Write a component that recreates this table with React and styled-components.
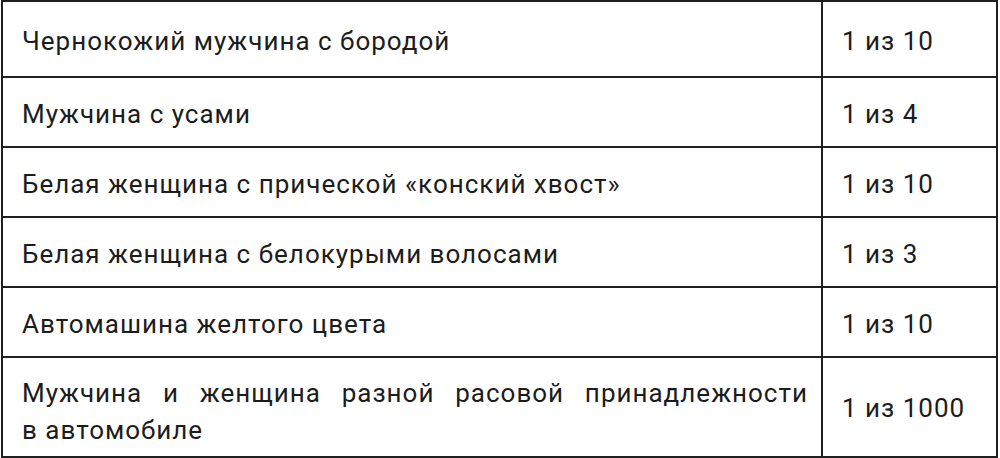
import React from 'react'
import styled, { createGlobalStyle } from 'styled-components'

const Global = createGlobalStyle`
  body {
    margin: 0;
    background: #ffffff;
    font-family: Roboto, "Liberation Sans", sans-serif;
  }
`

const Page = styled.div`
  width: 1000px;
  height: 458px;
  padding: 0 0 0 1px;
  box-sizing: border-box;
`

const Table = styled.table`
  width: 997px;
  border-collapse: collapse;
  color: #1c1c1c;
  font-size: 26px;
  letter-spacing: 1px;
`

const Cell = styled.td`
  border: 2px solid #1f1f1f;
  height: ${p => p.$h}px;
  padding: ${p => p.$top}px 13px 0 19px;
  box-sizing: border-box;
  line-height: 37px;
  vertical-align: middle;
  text-align: ${p => (p.$justify ? 'justify' : 'left')};
  width: ${p => (p.$narrow ? '175px' : 'auto')};
`

const Keep = styled.span`
  white-space: nowrap;
`

const rows = [
  ['Чернокожий мужчина с бородой', '1 из 10'],
  ['Мужчина с усами', '1 из 4'],
  ['Белая женщина с прической «конский хвост»', '1 из 10'],
  ['Белая женщина с белокурыми волосами', '1 из 3'],
  ['Автомашина желтого цвета', '1 из 10'],
  [
    <>
      Мужчина и женщина разной расовой принадлежности <Keep>в автомобиле</Keep>
    </>,
    '1 из 1000',
  ],
]

export default function App() {
  return (
    <Page>
      <Global />
      <Table>
        <tbody>
          {rows.map(([a, b], i) => {
            const tall = i === rows.length - 1
            const h = tall ? 100 : i === 0 ? 76 : 70
            return (
              <tr key={i}>
                <Cell $h={h} $top={tall ? 10 : 5} $justify={tall}>{a}</Cell>
                <Cell $h={h} $top={tall ? 2 : 5} $narrow>{b}</Cell>
              </tr>
            )
          })}
        </tbody>
      </Table>
    </Page>
  )
}
